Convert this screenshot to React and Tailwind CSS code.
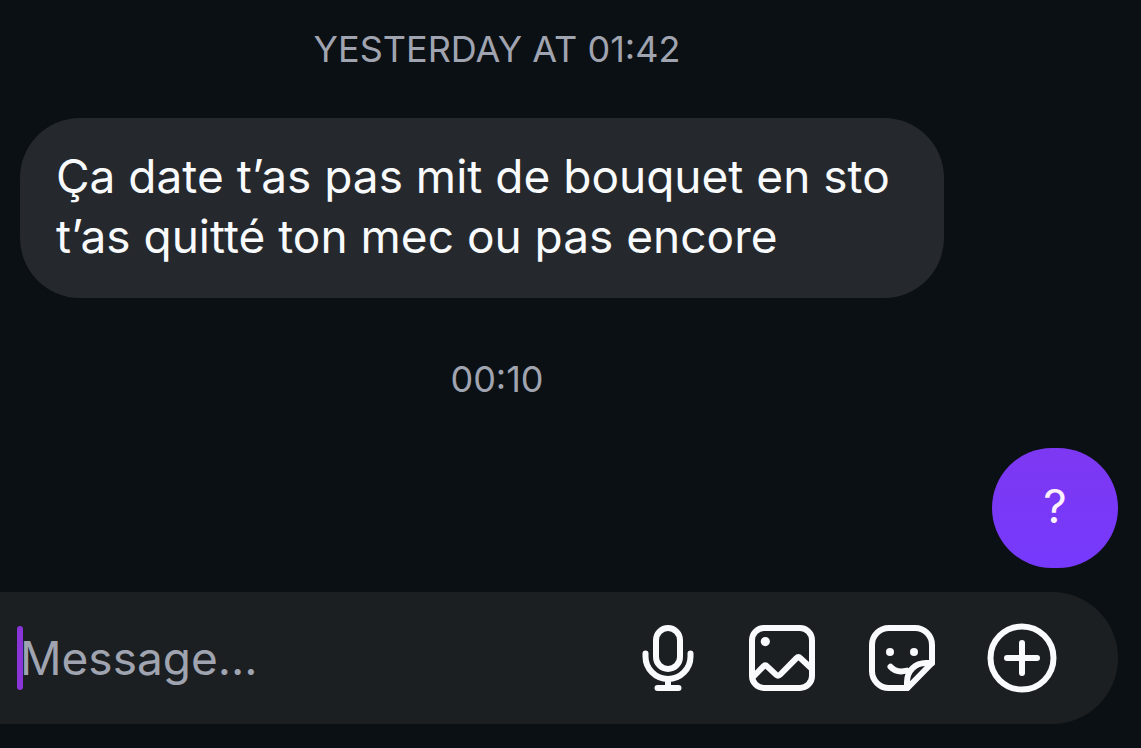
const MicIcon = () => (
  <svg
    viewBox="0 0 60 72"
    className="h-[72px] w-[60px]"
    fill="none"
    stroke="currentColor"
    strokeWidth="6"
    strokeLinecap="round"
    strokeLinejoin="round"
    aria-hidden="true"
  >
    <rect x="18" y="6" width="24" height="41" rx="12" />
    <path d="M7.5 31.5V34.5A22.5 22.5 0 0 0 52.5 34.5V31.5" />
    <path d="M30 57V66M19.5 66H40.5" />
  </svg>
);

const ImageIcon = () => (
  <svg
    viewBox="0 0 72 72"
    className="size-[72px]"
    fill="none"
    stroke="currentColor"
    strokeWidth="6"
    strokeLinejoin="round"
    aria-hidden="true"
  >
    <rect x="6" y="6" width="60" height="60" rx="12" />
    <circle cx="19.3" cy="19.6" r="4.6" fill="currentColor" stroke="none" />
    <path d="M6.5 55.5L17.2 44.6Q19.3 42.5 21.4 44.6L30 52.6Q32.2 54.6 34.3 52.5L50.2 36.4Q52.4 34.2 54.6 36.3L65.5 46.5" />
  </svg>
);

const StickerIcon = () => (
  <svg
    viewBox="0 0 72 72"
    className="size-[72px]"
    fill="none"
    stroke="currentColor"
    strokeWidth="6"
    strokeLinecap="round"
    strokeLinejoin="round"
    aria-hidden="true"
  >
    <path d="M66 41V23A17 17 0 0 0 49 6H23A17 17 0 0 0 6 23V49A17 17 0 0 0 23 66H41.5Z" />
    <path d="M41 66V60C41 49 49 41 60 41H66" />
    <path d="M24.5 44.8C27.5 48.2 31.5 49.6 36 49.4L41 48.6" />
    <circle cx="24" cy="30" r="4" fill="currentColor" stroke="none" />
    <circle cx="48" cy="30" r="4" fill="currentColor" stroke="none" />
  </svg>
);

const PlusIcon = () => (
  <svg
    viewBox="0 0 72 72"
    className="size-[72px]"
    fill="none"
    stroke="currentColor"
    strokeWidth="6"
    strokeLinecap="round"
    aria-hidden="true"
  >
    <circle cx="36" cy="36" r="31.5" />
    <path d="M36 21V51M21 36H51" />
  </svg>
);

const actions = [
  { label: "Record voice message", Icon: MicIcon },
  { label: "Send a photo", Icon: ImageIcon },
  { label: "Send a sticker", Icon: StickerIcon },
  { label: "More options", Icon: PlusIcon },
];

const messages = [
  {
    id: 1,
    time: "YESTERDAY AT 01:42",
    text: "Ça date t’as pas mit de bouquet en sto t’as quitté ton mec ou pas encore",
    mine: false,
  },
  { id: 2, time: "00:10", text: "?", mine: true },
];

const Message = ({ time, text, mine }) => (
  <li className="flex flex-col">
    <time className="mb-12 pr-[124px] text-center text-[36px] leading-[42px] text-[#a0a4b0]">
      {time}
    </time>
    <p
      className={`max-w-[924px] min-w-[126px] rounded-[60px] px-9 pt-7 pb-8 text-[46px] leading-[60px] ${
        mine
          ? "self-end bg-linear-to-b from-[#7d38f2] to-[#7639fc] text-center text-[#fdf0ff]"
          : "ml-5 self-start bg-[#25292d] text-[#f8fafc]"
      }`}
    >
      {text}
    </p>
  </li>
);

const App = () => {
  return (
    <main className="flex min-h-screen flex-col justify-end bg-[#0b1014] py-6 font-['Inter',sans-serif]">
      <ol className="flex flex-col gap-[60px] pr-[23px]">
        {messages.map((m) => (
          <Message key={m.id} {...m} />
        ))}
      </ol>

      {/* Composer */}
      <form
        onSubmit={(e) => e.preventDefault()}
        className="mt-6 mr-[23px] flex h-[132px] items-center rounded-r-full bg-[#1b1f22] pr-[60px] pl-5 text-[#f8fafc]"
      >
        <div className="relative min-w-0 flex-1">
          <input
            type="text"
            aria-label="Message"
            placeholder="Message..."
            className="block w-full bg-transparent text-[46px] leading-[60px] caret-[#8a35d8] outline-none placeholder:text-[#a0a4b0]"
          />
          <span className="pointer-events-none absolute -inset-y-0.5 -left-[3px] w-1.5 rounded-full bg-[#8a35d8]" />
        </div>
        <div className="flex items-center gap-12">
          {actions.map(({ label, Icon }) => (
            <button key={label} type="button" aria-label={label}>
              <Icon />
            </button>
          ))}
        </div>
      </form>
    </main>
  );
};

export default App;
